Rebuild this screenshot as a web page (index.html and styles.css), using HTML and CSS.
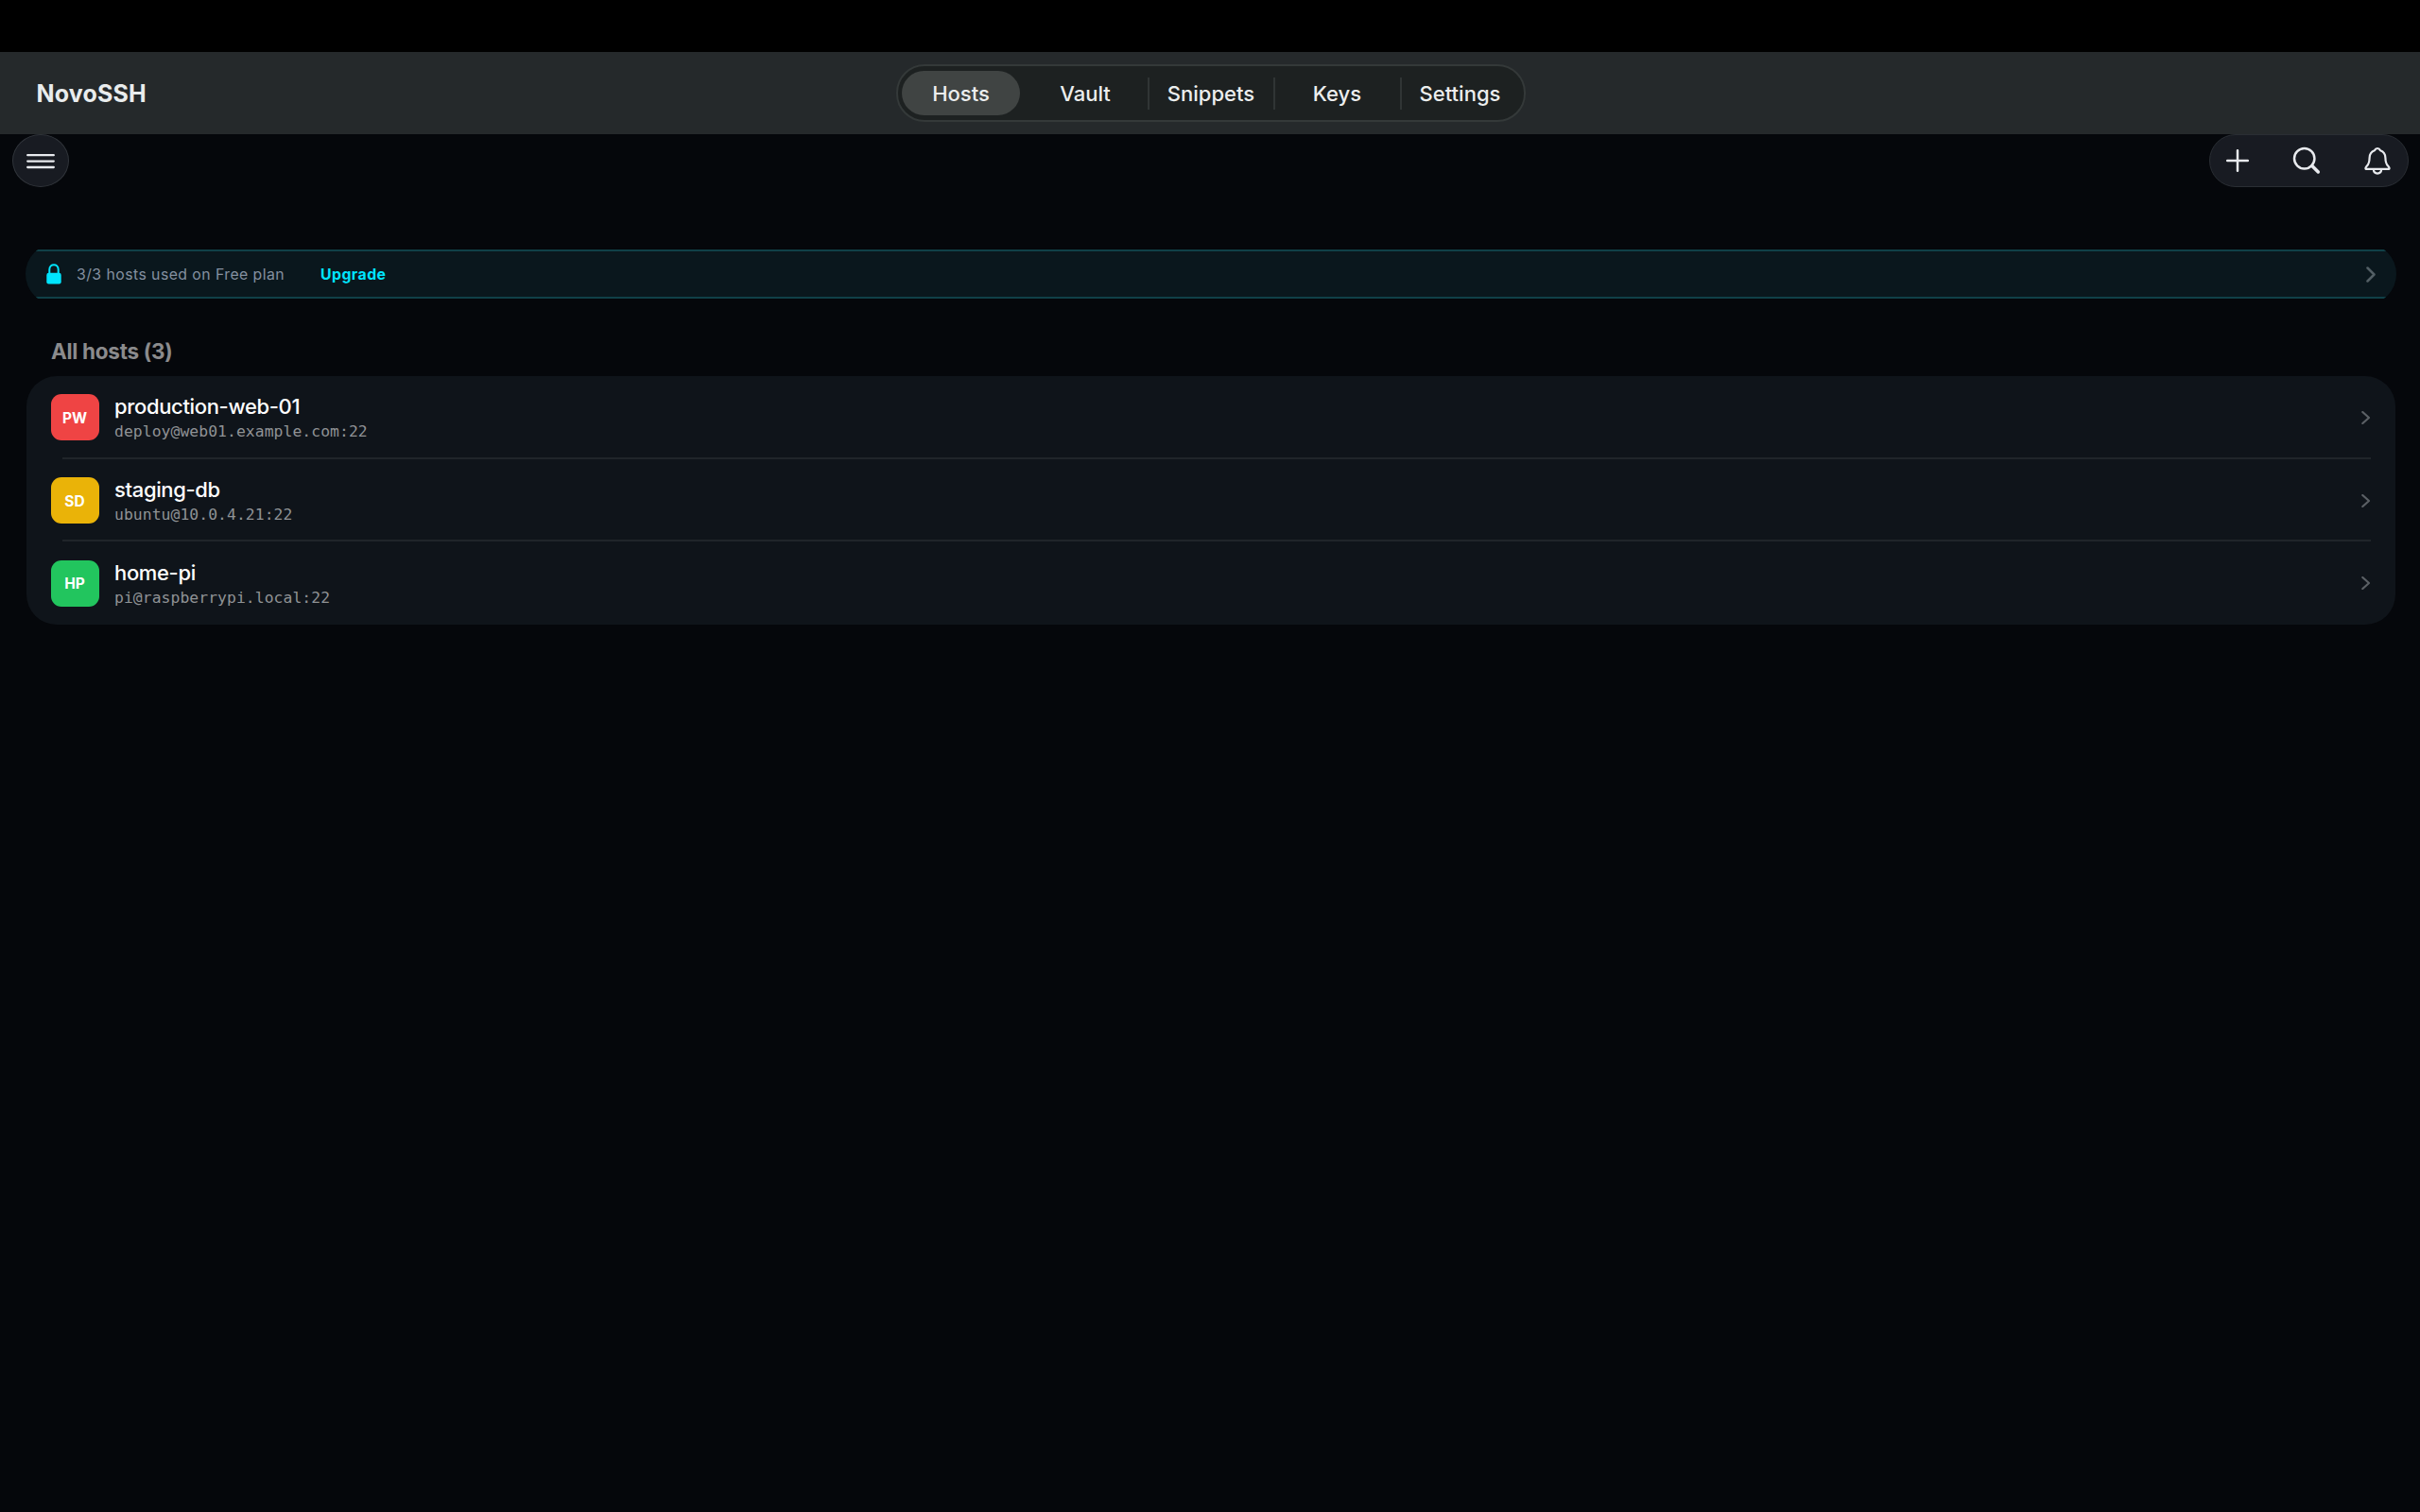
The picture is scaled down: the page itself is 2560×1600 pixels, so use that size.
FILE: index.html
```html
<!DOCTYPE html>
<html lang="en">
<head>
<meta charset="utf-8">
<title>NovoSSH</title>
<link rel="stylesheet" href="styles.css">
</head>
<body>
<header class="titlebar">
  <h1 class="brand">NovoSSH</h1>
  <nav class="tabs">
    <a class="tab tab-active"><span class="tab-label">Hosts</span></a>
    <a class="tab">Vault</a>
    <a class="tab tab-split">Snippets</a>
    <a class="tab tab-split">Keys</a>
    <a class="tab tab-split tab-last">Settings</a>
  </nav>
</header>
<div class="toolbar">
  <button class="menu" aria-label="Menu">
    <svg width="30" height="17" viewBox="0 0 30 17"><path d="M1.2 2.2H28.8M1.2 8.6H28.8M1.2 15H28.8"/></svg>
  </button>
  <div class="actions">
    <svg class="icon-plus" width="24" height="24" viewBox="0 0 24 24"><path d="M12 1.2V22.8M1.2 12H22.8"/></svg>
    <svg class="icon-search" width="30" height="30" viewBox="0 0 30 30"><circle cx="12.7" cy="12.7" r="10.7"/><path class="handle" d="M20.8 20.5L27.3 27"/></svg>
    <svg class="icon-bell" width="28" height="30" viewBox="0 0 28 30"><path d="M14 2C12 2 11.3 3.4 10.9 4.3C7.5 5.5 5.7 8.5 5.6 12C5.5 17 4.9 18.5 2.9 20.5C1.3 22.2 1 23.6 2 23.8H26C27 23.6 26.7 22.2 25.1 20.5C23.1 18.5 22.5 17 22.4 12C22.3 8.5 20.5 5.5 17.1 4.3C16.7 3.4 16 2 14 2Z"/><path d="M9.8 24.2C10.2 30 17.8 30 18.2 24.2"/></svg>
  </div>
</div>
<main>
  <section class="banner">
    <svg class="lock" width="16" height="22" viewBox="0 0 16 22"><rect x="0.3" y="9.7" width="15.4" height="11.8" rx="2.2"/><path d="M3.3 10.5V6.2C3.3 -0.3 12.7 -0.3 12.7 6.2V10.5"/></svg>
    <span class="usage">3/3 hosts used on Free plan</span>
    <a class="upgrade">Upgrade</a>
    <svg class="chevron" width="10" height="17" viewBox="0 0 10 17"><path d="M1.5 1.5L8.5 8.5L1.5 15.5"/></svg>
  </section>
  <h2 class="heading">All hosts (3)</h2>
  <ul class="hosts">
    <li class="host">
      <span class="avatar red">PW</span>
      <div class="info"><span class="name">production-web-01</span><span class="address">deploy@web01.example.com:22</span></div>
      <svg class="chevron small" width="10" height="14" viewBox="0 0 10 14"><path d="M1.3 1L8 7L1.3 13"/></svg>
    </li>
    <li class="host">
      <span class="avatar yellow">SD</span>
      <div class="info"><span class="name">staging-db</span><span class="address">ubuntu@10.0.4.21:22</span></div>
      <svg class="chevron small" width="10" height="14" viewBox="0 0 10 14"><path d="M1.3 1L8 7L1.3 13"/></svg>
    </li>
    <li class="host">
      <span class="avatar green">HP</span>
      <div class="info"><span class="name">home-pi</span><span class="address">pi@raspberrypi.local:22</span></div>
      <svg class="chevron small" width="10" height="14" viewBox="0 0 10 14"><path d="M1.3 1L8 7L1.3 13"/></svg>
    </li>
  </ul>
</main>
</body>
</html>
```
FILE: styles.css
```css
* { box-sizing: border-box; }

body {
  margin: 0;
  padding-top: 55px;
  min-height: 1600px;
  background: linear-gradient(#000 55px, #05070b 55px);
  color: #fff;
  font-family: Inter, "Liberation Sans", sans-serif;
}

svg { display: block; flex: none; fill: none; stroke-linecap: round; stroke-linejoin: round; }

.titlebar {
  display: grid;
  grid-template-columns: 948px 666px;
  align-items: center;
  height: 87px;
  background: #25292b;
}

.brand {
  margin: 0;
  padding-left: 38.5px;
  font-size: 25px;
  font-weight: 700;
  letter-spacing: 0.15px;
  color: #e9eced;
}

.tabs {
  display: grid;
  grid-template-columns: 131px 133px 133px 134px 131px;
  height: 61px;
  border: 2px solid #343939;
  border-radius: 30px;
  background: #1d2121;
  font-size: 22px;
  font-weight: 500;
  color: #eceeee;
}

.tab { display: flex; align-items: center; justify-content: center; padding: 1px 0 0 1px; }
.tab-active { padding: 0 0 1px 4px; justify-content: flex-start; }
.tab-label {
  display: flex;
  align-items: center;
  justify-content: center;
  width: 125px;
  height: 47px;
  padding-top: 2px;
  border-radius: 24px;
  background: #404443;
}

.tab-split { background: linear-gradient(#303535, #303535) left center / 2px 34px no-repeat; }
.tab-last { padding-right: 5px; }

.toolbar { display: flex; justify-content: space-between; height: 56px; padding: 0 12px 0 13px; }

.menu {
  display: flex;
  align-items: center;
  justify-content: center;
  width: 60px;
  height: 56px;
  padding: 0;
  border: 1px solid #30343a;
  border-radius: 50%;
  background: #181b22;
  stroke: #e8eaee;
  stroke-width: 2.3;
}

.actions {
  display: flex;
  align-items: center;
  width: 211px;
  height: 56px;
  padding-left: 17px;
  border: 1px solid #2a2e34;
  border-radius: 28px;
  background: #181b22;
  stroke: #e8eaee;
  stroke-width: 2.5;
}
.icon-search { margin-left: 46px; }
.handle { stroke-width: 3.5; }
.icon-bell { margin-left: 46px; stroke-width: 2.2; }

main { padding: 66px 25px 0 27px; }

/* The end caps are arcs wider than the strip is tall, so they meet its edges at an angle. */
.banner {
  display: flex;
  align-items: center;
  height: 52px;
  padding: 0 22px;
  border: solid #104047;
  border-width: 2px 0;
  clip-path: inset(-6.5px 0 round 32.5px);
  background: #0a171d;
  font-size: 15.8px;
}
.lock { fill: #00e5ff; }
.lock path { fill: none; stroke: #00e5ff; stroke-width: 2; }
.usage { width: 258px; margin-left: 16px; letter-spacing: 0.45px; color: #8490a0; white-space: nowrap; }
.upgrade { font-weight: 700; letter-spacing: 0.45px; color: #00e5ff; }

.chevron { margin-left: auto; stroke: #525e64; stroke-width: 2.5; }

.heading {
  margin: 42px 0 0 27px;
  font-size: 22.5px;
  line-height: 28px;
  font-weight: 700;
  letter-spacing: -0.3px;
  color: #8b8b8d;
}

.hosts {
  margin: 12px 1px 0;
  padding: 0;
  list-style: none;
  height: 263px;
  border-radius: 32px;
  background: #0f141a;
}

.host {
  display: flex;
  align-items: center;
  height: 87.7px;
  padding: 0 26px 0 25.5px;
  background: linear-gradient(#20252a, #20252a) 38px bottom / calc(100% - 64px) 2px no-repeat;
}
.host:last-child { background: none; }

.avatar {
  display: flex;
  align-items: center;
  justify-content: center;
  width: 51px;
  height: 49px;
  padding-top: 1px;
  border-radius: 11px;
  font-size: 15.5px;
  font-weight: 700;
}
.red { background: #ef4444; }
.yellow { background: #eab308; }
.green { background: #22c55e; }

.info { display: flex; flex-direction: column; margin-left: 16.5px; padding-top: 2px; }
.name { font-size: 22px; line-height: 28px; font-weight: 500; letter-spacing: -0.35px; }
.address { font: 16.4px/25px "DejaVu Sans Mono", monospace; letter-spacing: 0.05px; color: #8f9295; }
.small { stroke: #5b6065; stroke-width: 2.2; }
```
